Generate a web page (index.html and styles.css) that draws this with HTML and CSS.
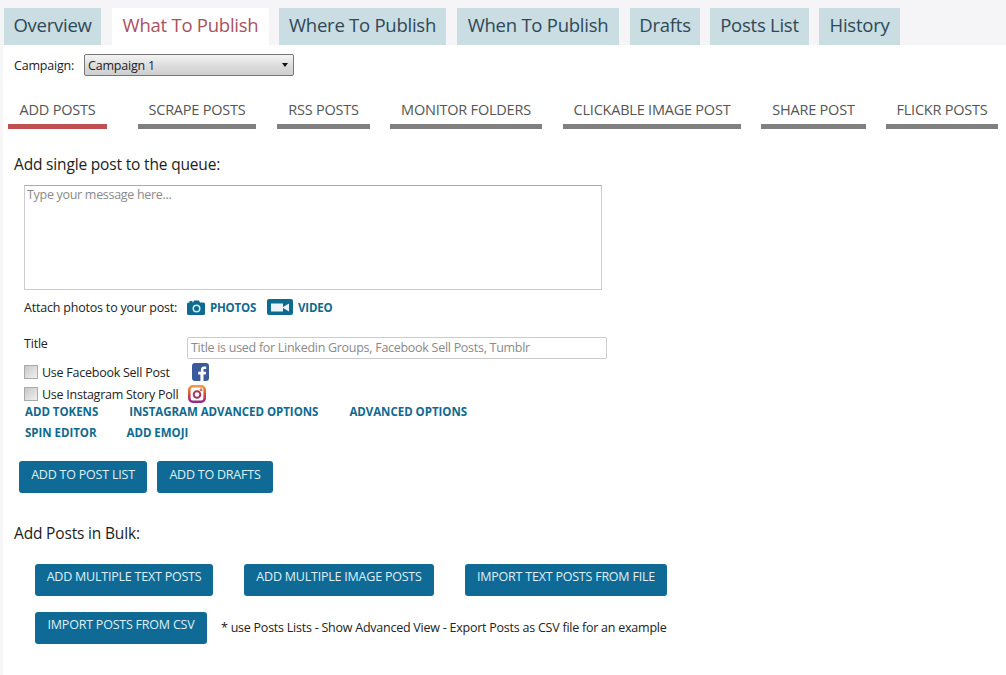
FILE: index.html
```html
<!DOCTYPE html>
<html lang="en">
<head>
<meta charset="utf-8">
<title>What To Publish</title>
<link rel="stylesheet" href="styles.css">
</head>
<body>
<div class="page">
  <nav class="tabs">
    <a class="tab t1">Overview</a>
    <a class="tab t2 active">What To Publish</a>
    <a class="tab t3">Where To Publish</a>
    <a class="tab t4">When To Publish</a>
    <a class="tab t5">Drafts</a>
    <a class="tab t6">Posts List</a>
    <a class="tab t7">History</a>
  </nav>
  <div class="campaign">
    <span class="campaign-label">Campaign:</span>
    <div class="select"><span>Campaign 1</span><i class="arrow"></i></div>
  </div>
  <nav class="subtabs">
    <a class="sub s1 active">ADD POSTS</a>
    <a class="sub s2">SCRAPE POSTS</a>
    <a class="sub s3">RSS POSTS</a>
    <a class="sub s4">MONITOR FOLDERS</a>
    <a class="sub s5">CLICKABLE IMAGE POST</a>
    <a class="sub s6">SHARE POST</a>
    <a class="sub s7">FLICKR POSTS</a>
  </nav>
  <h2 class="heading first">Add single post to the queue:</h2>
  <div class="message">Type your message here...</div>
  <div class="attach">
    <span class="attach-label">Attach photos to your post:</span>
    <a class="media photos">
      <svg width="18" height="15" viewBox="0 0 18 15"><path fill="#0f6a8f" d="M1.500 2.500H2.500V1h3v1.500H6L7 .5h5l1 2h3.500A1.500 1.500 0 0 1 18 4v9.500a1.500 1.500 0 0 1-1.500 1.500h-15A1.500 1.500 0 0 1 0 13.500V4a1.500 1.500 0 0 1 1.500-1.500z"/><circle cx="9.500" cy="8.500" r="4" fill="#cfeaf2"/><circle cx="9.500" cy="8.500" r="2.500" fill="#0f6a8f"/></svg>
      PHOTOS
    </a>
    <a class="media video">
      <svg width="26" height="16" viewBox="0 0 26 16"><rect width="26" height="16" rx="2" fill="#0f6a8f"/><rect x="4" y="4.500" width="12" height="8" fill="#e8f4f8"/><path fill="#e8f4f8" d="M16 8l6-3.500v8L16 9z"/></svg>
      VIDEO
    </a>
  </div>
  <div class="title-row">
    <label class="title-label">Title</label>
    <div class="title-input">Title is used for Linkedin Groups, Facebook Sell Posts, Tumblr</div>
  </div>
  <div class="check-row fb">
    <i class="check"></i><span class="check-text">Use Facebook Sell Post</span>
    <svg class="fb-icon" width="17" height="18" viewBox="0 0 17 18"><rect width="17" height="18" rx="3" fill="#3b5a9b"/><path fill="#fff" d="M11.500 18v-6.500h2.200l.4-2.700h-2.600V7.200c0-.8.300-1.300 1.400-1.300h1.300V3.500c-.3 0-1.100-.1-2-.1-2 0-3.300 1.200-3.300 3.400v2H6.200v2.700h2.200V18z"/></svg>
  </div>
  <div class="check-row ig">
    <i class="check"></i><span class="check-text">Use Instagram Story Poll</span>
    <svg class="ig-icon" width="18" height="18" viewBox="0 0 18 18"><defs><linearGradient id="ig" x1="0" y1="0" x2="0" y2="1"><stop offset="0" stop-color="#ef9a45"/><stop offset=".55" stop-color="#d8443f"/><stop offset="1" stop-color="#8a2f8f"/></linearGradient></defs><rect x="1.300" y="1.300" width="15.400" height="15.400" rx="3.500" fill="none" stroke="url(#ig)" stroke-width="2.600"/><circle cx="9" cy="9.500" r="3.300" fill="none" stroke="#a8325f" stroke-width="2"/><rect x="11.800" y="3.400" width="2.600" height="2.600" rx=".6" fill="#e0703f"/></svg>
  </div>
  <div class="links l1">
    <a>ADD TOKENS</a><a class="g1">INSTAGRAM ADVANCED OPTIONS</a><a class="g2">ADVANCED OPTIONS</a>
  </div>
  <div class="links l2">
    <a>SPIN EDITOR</a><a class="g3">ADD EMOJI</a>
  </div>
  <div class="actions">
    <a class="btn b1">ADD TO POST LIST</a>
    <a class="btn b2">ADD TO DRAFTS</a>
  </div>
  <h2 class="heading bulk">Add Posts in Bulk:</h2>
  <div class="bulk-row r1">
    <a class="btn b3">ADD MULTIPLE TEXT POSTS</a>
    <a class="btn b4">ADD MULTIPLE IMAGE POSTS</a>
    <a class="btn b5">IMPORT TEXT POSTS FROM FILE</a>
  </div>
  <div class="bulk-row r2">
    <a class="btn b6">IMPORT POSTS FROM CSV</a>
    <span class="note">* use Posts Lists - Show Advanced View - Export Posts as CSV file for an example</span>
  </div>
</div>
</body>
</html>
```
FILE: styles.css
```css
* { box-sizing: border-box; }
html, body { margin: 0; padding: 0; height: 100%; overflow: hidden; }
body { background: #fff; font-family: "Open Sans", "Noto Sans", "Liberation Sans", sans-serif; color: #222; }
.page { width: 1006px; height: 675px; border-left: 3px solid #f6f6f6; }
.tabs { display: flex; height: 45px; padding: 8px 0 0 4px; background: #f5f5f7; margin-left: -3px; }
.tab { display: flex; align-items: center; justify-content: center; height: 37px; padding-bottom: 4px; background: #c9dde2; color: #2f4858; font-size: 18.500px; letter-spacing: -.25px; }
.tab.active { background: #fff; color: #a8525f; }
.t1 { width: 97px; margin-right: 11px; }
.t2 { width: 157px; margin-right: 10px; }
.t3 { width: 167px; margin-right: 11px; }
.t4 { width: 162px; margin-right: 11px; }
.t5 { width: 70px; margin-right: 10px; }
.t6 { width: 99px; margin-right: 10px; }
.t7 { width: 81px; }
.campaign { display: flex; align-items: center; height: 22px; margin-top: 9px; padding-left: 11px; }
.campaign-label { width: 70px; font-size: 12.500px; letter-spacing: -.2px; color: #222; }
.select { display: flex; align-items: center; justify-content: space-between; width: 210px; height: 22px; padding: 0 5px 0 3px; border: 1px solid #777; border-radius: 2px; background: linear-gradient(#f4f4f4, #dcdcdc 55%, #cfcfcf); font-size: 12.500px; letter-spacing: -.2px; color: #222; }
.arrow { width: 0; height: 0; border-left: 3.500px solid transparent; border-right: 3.500px solid transparent; border-top: 4px solid #111; }
.subtabs { display: flex; height: 29px; margin-top: 24px; margin-left: 5px; }
.sub { display: flex; justify-content: center; height: 29px; border-bottom: 5px solid #808080; color: #555; font-size: 14.500px; letter-spacing: -.22px; line-height: 20px; white-space: nowrap; }
.sub.active { border-bottom-color: #c0504f; }
.s1 { width: 99px; margin-right: 31px; }
.s2 { width: 118px; margin-right: 21px; }
.s3 { width: 93px; margin-right: 20px; }
.s4 { width: 152px; margin-right: 21px; }
.s5 { width: 178px; margin-right: 20px; }
.s6 { width: 105px; margin-right: 20px; }
.s7 { width: 112px; }
.heading { margin: 0; font-weight: 400; font-size: 15.500px; line-height: 22px; letter-spacing: -.17px; color: #1c1c1c; padding-left: 11px; }
.first { margin-top: 24px; }
.message { width: 578px; height: 105px; margin: 10px 0 0 21px; padding: 0 2px; border: 1px solid #ccc; border-top-color: #aaa; font-size: 12.500px; line-height: 17px; letter-spacing: -.3px; color: #8a8a8a; }
.attach { display: flex; align-items: center; height: 20px; margin-top: 7px; padding-left: 21px; }
.attach-label { width: 163px; font-size: 12.500px; letter-spacing: -.2px; color: #222; }
.media { display: flex; align-items: center; color: #0f6a8f; font-size: 11.500px; font-weight: 700; letter-spacing: -.2px; }
.photos { gap: 5px; width: 80px; }
.video { gap: 5px; }
.title-row { display: flex; align-items: flex-start; margin-top: 18px; padding-left: 21px; }
.title-label { width: 163px; font-size: 12.500px; letter-spacing: -.2px; line-height: 17px; }
.title-input { width: 420px; height: 22px; margin-top: 2px; padding-left: 3px; border: 1px solid #ccc; border-radius: 2px; color: #8a8a8a; font-size: 12.500px; letter-spacing: -.28px; line-height: 20px; white-space: nowrap; }
.check-row { display: flex; align-items: center; height: 20px; padding-left: 21px; font-size: 12.500px; letter-spacing: -.25px; }
.fb { margin-top: 3px; }
.ig { margin-top: 2px; }
.check { width: 14px; height: 14px; margin-right: 4px; border: 1px solid #aaa; background: linear-gradient(135deg, #c8c8c8, #f0f0f0); }
.check-text { white-space: nowrap; }
.fb-icon { margin-left: 22px; }
.ig-icon { margin-left: 10px; }
.links { display: flex; height: 16px; padding-left: 22px; color: #0f6a8f; font-size: 11.500px; font-weight: 700; letter-spacing: -.03px; line-height: 16px; }
.l1 { margin-top: 0; }
.l2 { margin-top: 5px; }
.g1 { margin-left: 31px; }
.g2 { margin-left: 31px; }
.g3 { margin-left: 30px; }
.btn { display: flex; justify-content: center; height: 32px; padding-top: 4px; background: #0f6a96; border-radius: 3px; color: #dff1f8; font-size: 12.500px; line-height: 18px; letter-spacing: -.22px; white-space: nowrap; }
.actions { display: flex; gap: 10px; margin-top: 20px; padding-left: 16px; }
.actions .btn { padding-top: 5px; }
.b1 { width: 128px; }
.b2 { width: 116px; }
.bulk { margin-top: 29px; }
.bulk-row { display: flex; padding-left: 32px; }
.r1 { margin-top: 20px; }
.r2 { margin-top: 16px; align-items: center; }
.b3 { width: 178px; margin-right: 31px; }
.b4 { width: 190px; margin-right: 31px; }
.b5 { width: 202px; }
.b6 { width: 172px; }
.note { margin-left: 14px; padding-bottom: 1px; font-size: 12.500px; letter-spacing: -.24px; white-space: nowrap; color: #222; }
```
